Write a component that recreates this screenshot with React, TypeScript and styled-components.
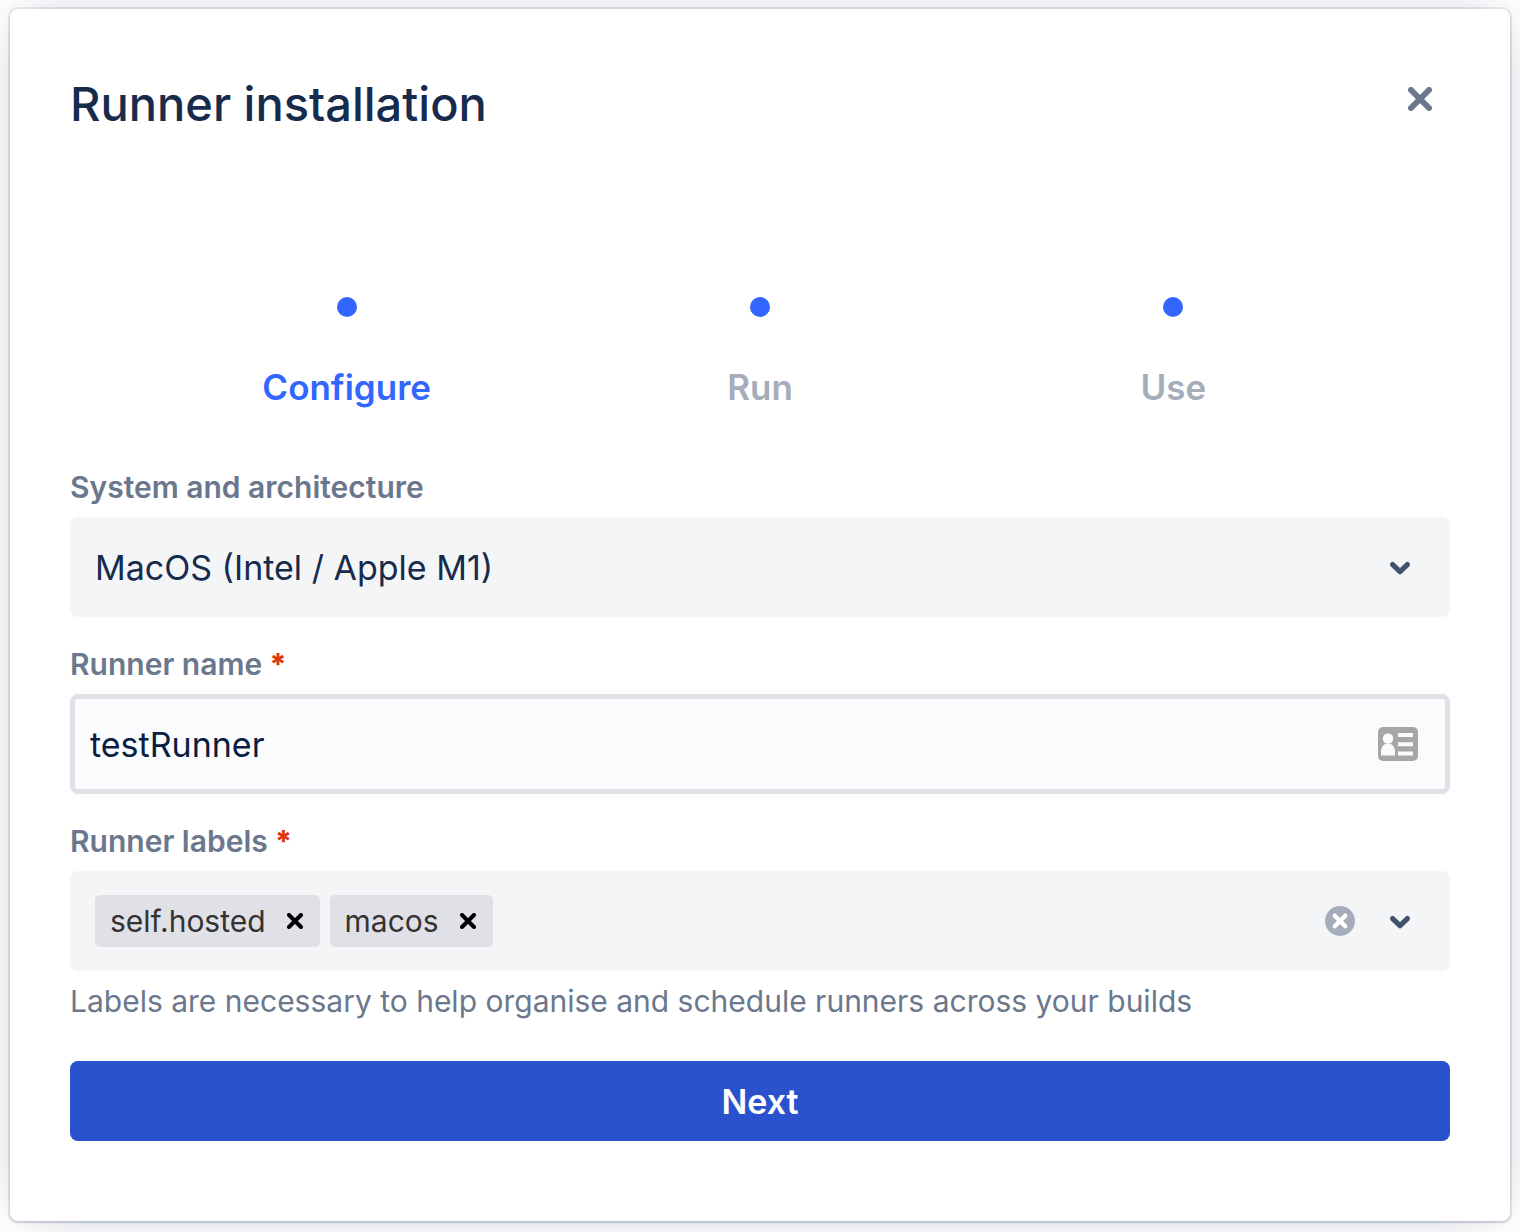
import React, { useState } from 'react';
import styled, { createGlobalStyle } from 'styled-components';

const GlobalStyle = createGlobalStyle`
  *, *::before, *::after { box-sizing: border-box; }
  body {
    margin: 0;
    background: #fff;
    color: #172b4d;
    font-family: Inter, Roboto, 'Liberation Sans', sans-serif;
  }
  button, input, select { font: inherit; color: inherit; }
`;

const Page = styled.div`
  padding: 9px 10px 11px;
`;

const Dialog = styled.section`
  padding: 60px 60px 80px;
  border-radius: 8px;
  background: #fff;
  box-shadow:
    0 0 0 2px rgba(9, 30, 66, 0.09),
    0 2px 3px rgba(9, 30, 66, 0.12),
    0 0 50px -15px rgba(9, 30, 66, 0.31);
`;

const Header = styled.header`
  display: flex;
  align-items: center;
  justify-content: space-between;
  height: 70px;
`;

const Title = styled.h1`
  margin: 0;
  font-size: 47px;
  line-height: 60px;
  font-weight: 500;
`;

const IconButton = styled.button<{ $size: number }>`
  display: flex;
  flex: none;
  align-items: center;
  justify-content: center;
  width: ${({ $size }) => $size}px;
  height: ${({ $size }) => $size}px;
  padding: 0;
  border: 0;
  background: none;
  cursor: pointer;
`;

const CloseButton = styled(IconButton)`
  align-self: flex-start;
  color: #6b778c;
`;

const Steps = styled.ol`
  display: grid;
  grid-template-columns: repeat(3, 1fr);
  margin: 0;
  padding: 158px 70px 0;
  list-style: none;
`;

const Step = styled.li<{ $current: boolean }>`
  display: flex;
  flex-direction: column;
  align-items: center;
  gap: 50px;
  color: ${({ $current }) => ($current ? '#3366ff' : '#a5adba')};
  font-size: 35px;
  line-height: 40px;
  font-weight: 600;

  &::before {
    content: '';
    width: 20px;
    height: 20px;
    border-radius: 50%;
    background: #3366ff;
  }
`;

const Form = styled.form`
  display: flex;
  flex-direction: column;
  gap: 27px;
  margin-top: 60px;
`;

const Field = styled.div`
  display: flex;
  flex-direction: column;
  gap: 10px;
`;

const Label = styled.label`
  display: flex;
  gap: 7px;
  color: #6b778c;
  font-size: 30px;
  line-height: 40px;
  font-weight: 600;
`;

const Required = styled.span`
  color: #de350b;
  font-weight: 800;
`;

const SelectBox = styled.div`
  display: grid;
  align-items: center;
  height: 100px;
  border-radius: 8px;
  background: #f4f5f7;

  & > * { grid-area: 1 / 1; }
  & > svg {
    justify-self: end;
    margin-right: 30px;
    color: #42526e;
    pointer-events: none;
  }
`;

const Select = styled.select`
  width: 100%;
  height: 100%;
  padding: 0 100px 0 25px;
  border: 0;
  border-radius: 8px;
  appearance: none;
  background: transparent;
  font-size: 34px;
`;

const TextBox = styled.div`
  display: flex;
  align-items: center;
  height: 100px;
  padding: 0 27px 0 15px;
  border: 5px solid #dfe1e6;
  border-radius: 8px;
  background: #fafbfc;
  color: #091e42;
`;

const TextInput = styled.input`
  flex: 1;
  min-width: 0;
  padding: 0;
  border: 0;
  outline: 0;
  background: transparent;
  font-size: 34px;
`;

const TagBox = styled.div`
  display: flex;
  align-items: center;
  gap: 10px;
  height: 100px;
  padding: 0 30px 0 25px;
  border-radius: 8px;
  background: #f4f5f7;
`;

const Tag = styled.span`
  display: flex;
  align-items: center;
  gap: 9px;
  height: 52px;
  padding: 0 5px 0 15px;
  border-radius: 5px;
  background: #dfe1e6;
  color: #333;
  font-size: 30px;
`;

const TagRemove = styled(IconButton)`
  color: #000;
`;

const ClearButton = styled(IconButton)`
  color: #a5adba;
`;

const MenuButton = styled(IconButton)`
  margin-left: 10px;
  color: #42526e;
`;

const Help = styled.p`
  margin: 0;
  color: #6b778c;
  font-size: 30px;
  line-height: 40px;
`;

const Submit = styled.button`
  height: 80px;
  margin-top: 13px;
  border: 0;
  border-radius: 8px;
  background: #2952cc;
  color: #fff;
  font-size: 34px;
  font-weight: 600;
  cursor: pointer;
`;

const Cross = ({ size, stroke }: { size: number; stroke: number }) => {
  const near = stroke / 2;
  const far = size - near;
  return (
    <svg width={size} height={size} fill="none" stroke="currentColor" strokeWidth={stroke} strokeLinecap="round" aria-hidden="true">
      <path d={`M${near} ${near}L${far} ${far}M${far} ${near}L${near} ${far}`} />
    </svg>
  );
};

const Chevron = () => (
  <svg width="40" height="40" viewBox="0 0 40 40" fill="none" stroke="currentColor" strokeWidth="5.2" strokeLinecap="round" strokeLinejoin="round" aria-hidden="true">
    <path d="M12.6 17.600L20 24.700L27.400 17.600" />
  </svg>
);

const ClearIcon = () => (
  <svg width="30" height="30" viewBox="0 0 30 30" aria-hidden="true">
    <circle cx="15" cy="15" r="15" fill="currentColor" />
    <path d="M9.7 9.7L20.3 20.3M20.3 9.7L9.7 20.3" stroke="#fff" strokeWidth="4.4" strokeLinecap="round" />
  </svg>
);

const ContactCard = () => (
  <svg width="40" height="34" viewBox="0 0 40 34" aria-hidden="true">
    <rect width="40" height="34" rx="5" fill="#a6a6a6" />
    <g fill="#fafbfc">
      <circle cx="10" cy="11.5" r="5.2" />
      <path d="M3 28.5V25c0-5 3-8.2 5.500-8.200h3C14 16.800 17 20 17 25v3.500z" />
      <path d="M20 6h15v4H20zM20 15.200h15v4H20zM20 24.500h15v4H20z" />
    </g>
  </svg>
);

const steps = ['Configure', 'Run', 'Use'];

export default function App() {
  const [name, setName] = useState('testRunner');
  const [labels, setLabels] = useState(['self.hosted', 'macos']);

  return (
    <>
      <GlobalStyle />
      <Page>
        <Dialog role="dialog" aria-labelledby="dialog-title">
          <Header>
            <Title id="dialog-title">Runner installation</Title>
            <CloseButton $size={60} type="button" aria-label="Close">
              <Cross size={24} stroke={6} />
            </CloseButton>
          </Header>
          <Steps>
            {steps.map((step, index) => (
              <Step key={step} $current={index === 0}>{step}</Step>
            ))}
          </Steps>
          <Form onSubmit={(event) => event.preventDefault()}>
            <Field>
              <Label htmlFor="system">System and architecture</Label>
              <SelectBox>
                <Select id="system" defaultValue="macos">
                  <option value="macos">MacOS (Intel / Apple M1)</option>
                </Select>
                <Chevron />
              </SelectBox>
            </Field>
            <Field>
              <Label htmlFor="name">Runner name<Required>*</Required></Label>
              <TextBox>
                <TextInput id="name" value={name} onChange={(event) => setName(event.target.value)} />
                <ContactCard />
              </TextBox>
            </Field>
            <Field>
              <Label htmlFor="labels">Runner labels<Required>*</Required></Label>
              <TagBox>
                {labels.map((label) => (
                  <Tag key={label}>
                    {label}
                    <TagRemove $size={40} type="button" aria-label={`Remove ${label}`} onClick={() => setLabels(labels.filter((item) => item !== label))}>
                      <Cross size={16} stroke={4} />
                    </TagRemove>
                  </Tag>
                ))}
                <TextInput id="labels" />
                <ClearButton $size={40} type="button" aria-label="Clear labels" onClick={() => setLabels([])}>
                  <ClearIcon />
                </ClearButton>
                <MenuButton $size={40} type="button" aria-label="Show labels">
                  <Chevron />
                </MenuButton>
              </TagBox>
              <Help>Labels are necessary to help organise and schedule runners across your builds</Help>
            </Field>
            <Submit type="submit">Next</Submit>
          </Form>
        </Dialog>
      </Page>
    </>
  );
}
